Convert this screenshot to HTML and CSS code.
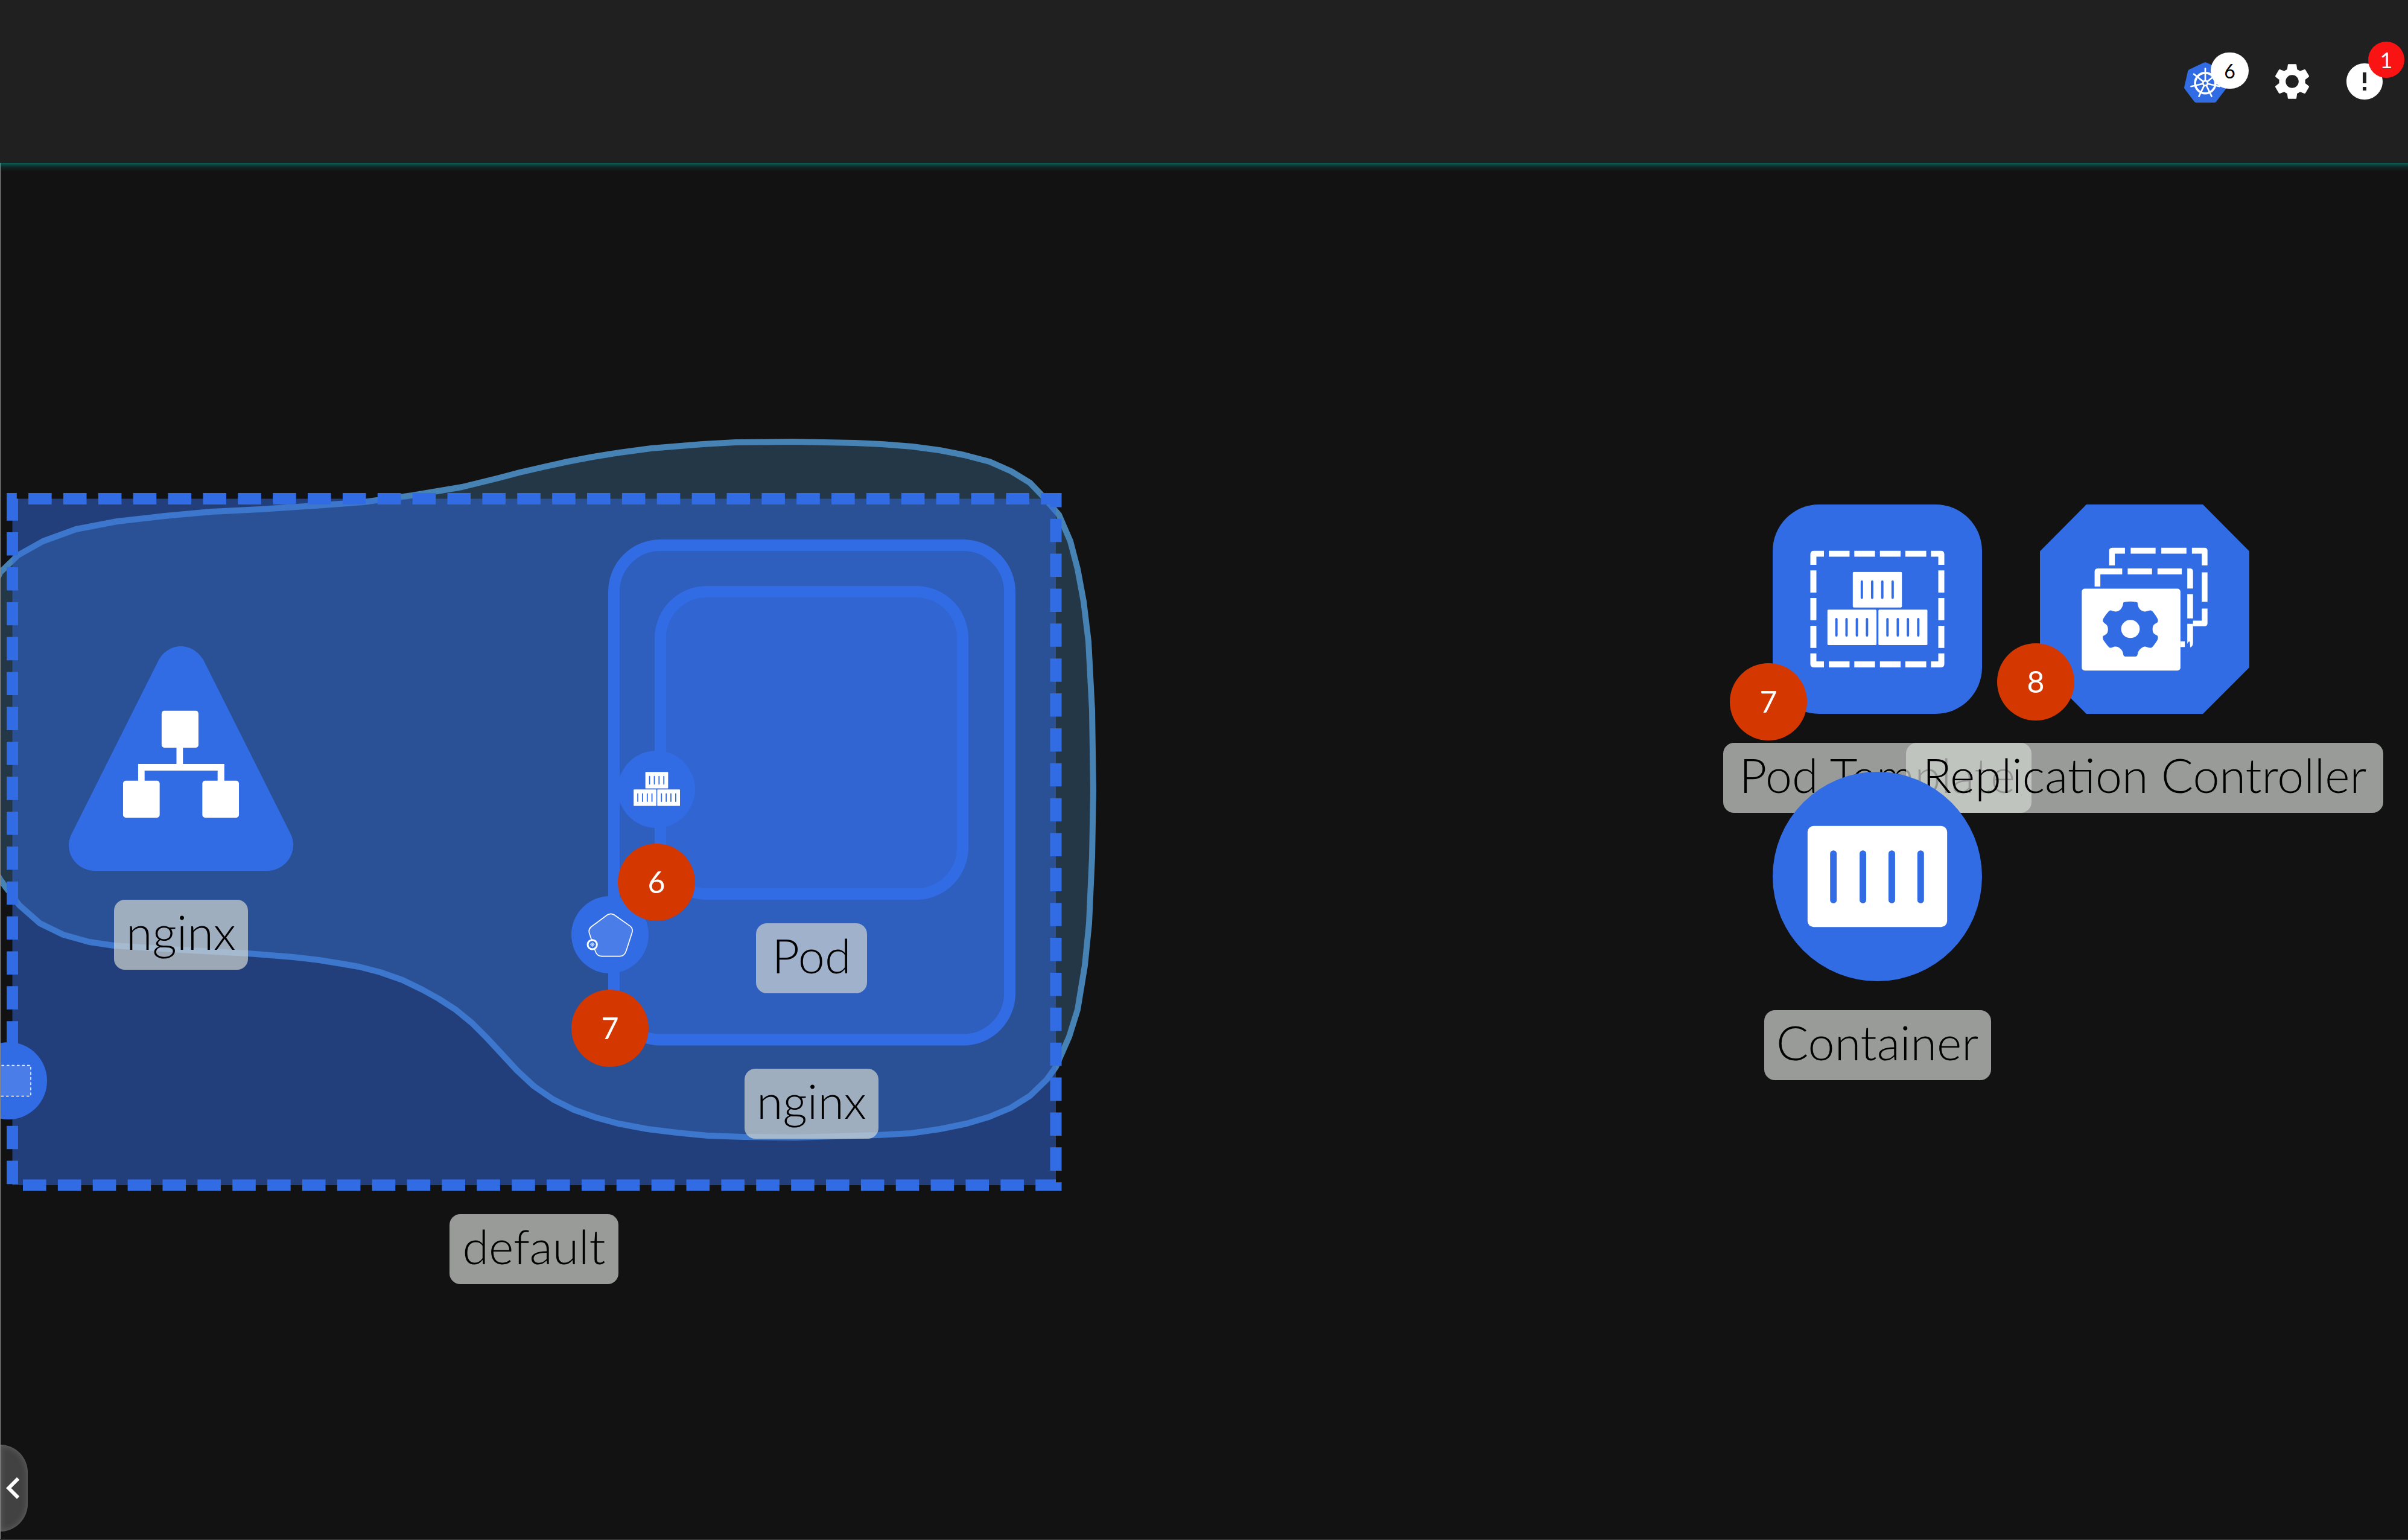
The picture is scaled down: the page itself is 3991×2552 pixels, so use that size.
FILE: index.html
```html
<!DOCTYPE html>
<html lang="en">
<head>
<meta charset="utf-8">
<meta name="viewport" content="width=device-width, initial-scale=1">
<title>Design canvas</title>
<link rel="stylesheet" href="styles.css">
</head>
<body>
<svg class="defs" aria-hidden="true">
  <symbol id="boxes" viewBox="526 413 466 343">
    <g fill="#fff">
      <rect x="645" y="414" width="228" height="165" rx="5"/>
      <rect x="527" y="589" width="228" height="165" rx="5"/>
      <rect x="764" y="589" width="228" height="165" rx="5"/>
    </g>
    <path d="M687 459V534M735 459V534M782 459V534M830 459V534M569 633V709M616 633V709M664 633V709M711 633V709M806 633V709M854 633V709M901 633V709M949 633V709" stroke="#326ce5" stroke-width="11" stroke-linecap="round"/>
  </symbol>
</svg>

<header class="topbar">
  <button class="tool tool-context" type="button" aria-label="Kubernetes contexts">
    <svg class="k8s" viewBox="180 188 210 202" aria-hidden="true">
      <path d="M278 190Q285 187 292 190L364 224Q370 227 372 233L390 312Q391 318 387 323L339 386Q335 390 329 390H241Q235 390 231 386L183 323Q179 318 180 312L198 233Q200 227 206 224Z" fill="#326ce5"/>
      <g stroke="#fff" fill="none" stroke-linecap="round">
        <circle cx="285" cy="293" r="51" stroke-width="11"/>
        <circle cx="285" cy="293" r="12" stroke-width="8"/>
        <g stroke-width="8">
          <path d="M285 281V220"/>
          <path d="M285 281V220" transform="rotate(51.43 285 293)"/>
          <path d="M285 281V220" transform="rotate(102.86 285 293)"/>
          <path d="M285 281V220" transform="rotate(154.29 285 293)"/>
          <path d="M285 281V220" transform="rotate(205.71 285 293)"/>
          <path d="M285 281V220" transform="rotate(257.14 285 293)"/>
          <path d="M285 281V220" transform="rotate(308.57 285 293)"/>
        </g>
      </g>
    </svg>
    <span class="count count-light">6</span>
  </button>
  <button class="tool" type="button" aria-label="Settings">
    <svg class="glyph" viewBox="0 0 24 24" aria-hidden="true"><path d="M19.14 12.94c.04-.3.06-.61.06-.94 0-.32-.02-.64-.07-.94l2.03-1.58c.18-.14.23-.41.12-.61l-1.92-3.32c-.12-.22-.37-.29-.59-.22l-2.39.96c-.5-.38-1.03-.7-1.62-.94l-.36-2.54c-.04-.24-.24-.41-.48-.41h-3.84c-.24 0-.43.17-.47.41l-.36 2.54c-.59.24-1.13.57-1.62.94l-2.39-.96c-.22-.08-.47 0-.59.22L2.74 8.87c-.12.21-.08.47.12.61l2.03 1.58c-.05.3-.09.63-.09.94s.02.64.07.94l-2.03 1.58c-.18.14-.23.41-.12.61l1.92 3.32c.12.22.37.29.59.22l2.39-.96c.5.38 1.03.7 1.62.94l.36 2.54c.05.24.24.41.48.41h3.84c.24 0 .44-.17.47-.41l.36-2.54c.59-.24 1.13-.56 1.62-.94l2.39.96c.22.08.47 0 .59-.22l1.92-3.32c.12-.22.07-.47-.12-.61l-2.01-1.58zM12 15.6c-1.98 0-3.6-1.62-3.6-3.6s1.62-3.6 3.6-3.6 3.6 1.62 3.6 3.6-1.62 3.6-3.6 3.6z"/></svg>
  </button>
  <button class="tool" type="button" aria-label="Notifications">
    <svg class="glyph" viewBox="0 0 24 24" aria-hidden="true"><path d="M12 2C6.480 2 2 6.480 2 12s4.480 10 10 10 10-4.480 10-10S17.520 2 12 2zm1 15h-2v-2h2v2zm0-4h-2V7h2v6z"/></svg>
    <span class="count count-alert">1</span>
  </button>
</header>

<main class="canvas">
  <svg class="hulls" aria-hidden="true">
    <g transform="translate(0 -270)">
      <path class="blob" d="M0 949L30 920L71 897L126 877L194 864L273 855L350 848L431 844L522 838L603 832L683 821L766 807L827 792L861 783L900 774L941 765L983 757L1027 750L1079 743L1165 736L1219 733L1314 732L1417 734L1461 736L1512 740L1557 746L1598 754L1640 765L1676 781L1707 800L1729 823L1755 853L1774 897L1786 943L1796 997L1804 1063L1810 1177L1812 1310L1810 1420L1805 1530L1798 1600L1786 1673L1772 1718L1750 1768L1735 1789L1707 1816L1675 1836L1639 1851L1602 1862L1558 1871L1510 1878L1454 1881L1318 1885L1232 1884L1173 1882L1122 1877L1073 1871L1025 1862L988 1852L951 1839L917 1822L885 1800L857 1774L833 1748L807 1720L782 1695L755 1673L727 1655L700 1640L667 1624L630 1611L595 1602L560 1596L529 1591L486 1586L436 1582L411 1580L300 1574L189 1567L148 1561L105 1549L66 1530L32 1500L10 1471L0 1457L-22 1415L-34 1300L-34 1120L-22 1000Z"/>
      <rect class="namespace" x="20.500" y="826.500" width="1729.500" height="1137.500"/>
      <rect class="group" x="1017.500" y="903.500" width="656" height="819.500" rx="77"/>
      <rect class="group" x="1094.500" y="980.500" width="501" height="501" rx="77"/>
    </g>
  </svg>

  <div class="node service">
    <svg class="shape" viewBox="319 174 1042 912" preserveAspectRatio="none" aria-hidden="true">
      <path d="M733 236C755 197 795 174 839 174C883 174 924 197 946 233L1350 938Q1361 958 1361 982C1361 1040 1305 1086 1243 1086H438C374 1086 319 1040 319 982Q319 960 331 938Z" fill="#326ce5"/>
      <path d="M819 580H849V652H1041V726H1010V679H671V726H641V652H819Z" fill="#fff"/>
      <rect x="750" y="436" width="171" height="150" rx="12" fill="#fff"/>
      <rect x="571" y="720" width="170" height="150" rx="12" fill="#fff"/>
      <rect x="939" y="720" width="170" height="150" rx="12" fill="#fff"/>
    </svg>
    <span class="label w-nginx">nginx</span>
  </div>

  <span class="label w-pod pod-label">Pod</span>
  <span class="label w-nginx deployment-label">nginx</span>
  <span class="label w-default namespace-label">default</span>

  <svg class="handle namespace-handle" viewBox="0 0 128 128" aria-hidden="true">
    <circle cx="64" cy="64" r="64" fill="#326ce5"/>
    <rect x="27" y="38.500" width="74" height="51" fill="#fff" fill-opacity=".12" stroke="#fff" stroke-width="1.500" stroke-dasharray="4.500 4"/>
  </svg>
  <svg class="handle pod-handle" viewBox="0 0 128 128" aria-hidden="true">
    <circle cx="64" cy="64" r="64" fill="#326ce5"/>
    <use href="#boxes" x="26" y="35" width="77" height="57"/>
  </svg>
  <svg class="handle deployment-handle" viewBox="51 46 384 384" aria-hidden="true">
    <circle cx="243" cy="238" r="192" fill="#326ce5"/>
    <path d="M230 139Q247 129 264 139L343 195Q358 206 353 227L324 317Q315 345 293 345H201Q177 345 169 317L140 230Q135 211 149 199Z" fill="#fff" fill-opacity=".12" stroke="#fff" stroke-width="5"/>
    <circle cx="155" cy="287" r="23" fill="#326ce5" stroke="#fff" stroke-width="9"/>
    <g stroke="#fff" fill="none" stroke-width="2">
      <circle cx="155" cy="287" r="8"/>
      <path d="M155 275V299M143 287H167M147 278L163 296M163 278L147 296"/>
    </g>
  </svg>
  <span class="errors pod-errors">6</span>
  <span class="errors deployment-errors">7</span>

  <div class="node pod-template">
    <svg class="shape" viewBox="273 101 972 972" aria-hidden="true">
      <rect x="273" y="101" width="972" height="972" rx="216" fill="#326ce5"/>
      <g fill="#fff">
        <path d="M511 316V343H476V381H448V332Q448 316 464 316ZM1008 316V343H1042V381H1070V332Q1070 316 1054 316ZM511 857V829H476V792H448V841Q448 857 464 857ZM1008 857V829H1042V792H1070V841Q1070 857 1054 857Z"/>
        <path d="M534 316h96v27h-96zM652 316h96v27h-96zM771 316h96v27h-96zM889 316h97v27h-97zM534 829h96v28h-96zM652 829h96v28h-96zM771 829h96v28h-96zM889 829h97v28h-97z"/>
        <path d="M448 407h28v103h-28zM448 535h28v103h-28zM448 664h28v103h-28zM1042 407h28v103h-28zM1042 535h28v103h-28zM1042 664h28v103h-28z"/>
      </g>
      <use href="#boxes" x="526" y="413" width="466" height="343"/>
    </svg>
    <span class="label w-template">Pod Template</span>
  </div>

  <div class="node replication">
    <svg class="shape" viewBox="223 101 766 972" preserveAspectRatio="none" aria-hidden="true">
      <path d="M393 101H819L989 318V857L819 1073H393L223 857V318Z" fill="#326ce5"/>
      <g fill="#fff">
        <path d="M534 302V329H497V384H476V316Q476 302 489 302ZM779 302V329H815V384H836V316Q836 302 825 302ZM555 302h91v27h-91zM667 302h92v27h-92zM815 416h21v137h-21zM815 584h21v68Q836 666 825 666H783V640H815Z"/>
        <path d="M524 398V425H444V482H423V412Q423 398 436 398ZM544 398h89v27h-89zM653 398h89v27h-89zM762 398H771Q783 398 783 412V491H762ZM762 517h21v113h-21zM762 655h21v88Q783 760 773 764L771 737Q766 736 762 748ZM737 736h16v27h-16z"/>
        <rect x="376" y="492" width="361" height="380" rx="11" ry="14"/>
      </g>
      <path fill-rule="evenodd" fill="#326ce5" d="M528 556Q529 552 554 551Q579 552 580 557C581 590 598 598 607 598C616 598 620 592 630 593Q636 595 652 628Q657 640 653 648C646 656 635 655 635 680C635 705 648 704 653 710Q657 720 652 732Q636 764 630 766C620 768 616 761 607 761C598 762 582 775 580 798Q579 806 572 807H536Q529 806 528 798C526 775 513 762 500 761C490 761 488 768 479 766Q474 765 456 732Q451 722 454 712C462 704 472 704 472 680C472 656 460 656 454 645Q451 638 456 628Q474 594 479 593C486 592 490 598 500 598C512 598 526 585 528 556ZM554 637A34 42 0 1 0 554 721A34 42 0 1 0 554 637Z"/>
    </svg>
    <span class="label w-replication">Replication Controller</span>
  </div>

  <span class="errors template-errors">7</span>
  <span class="errors replication-errors">8</span>

  <div class="node container">
    <svg class="shape" viewBox="0 0 348 348" aria-hidden="true">
      <circle cx="174" cy="174" r="174" fill="#326ce5"/>
      <rect x="58" y="90" width="232" height="168" rx="10" fill="#fff"/>
      <path d="M101 136V213M150 136V213M198 136V213M246 136V213" stroke="#326ce5" stroke-width="11" stroke-linecap="round"/>
    </svg>
    <span class="label w-container">Container</span>
  </div>

  <button class="drawer-toggle" type="button" aria-label="Expand panel">
    <svg class="glyph" viewBox="0 0 24 24" aria-hidden="true"><path d="M15.410 7.410L14 6l-6 6 6 6 1.410-1.410L10.830 12z"/></svg>
  </button>
</main>
</body>
</html>
```
FILE: styles.css
```css
* {
  box-sizing: border-box;
}

body {
  margin: 0;
  min-height: 100vh;
  display: flex;
  flex-direction: column;
  background: #121212;
  font-family: Lato, "Liberation Sans", sans-serif;
  font-weight: 300;
  overflow: hidden;
}

button {
  margin: 0;
  padding: 0;
  border: 0;
  background: none;
  color: inherit;
  font: inherit;
}

.defs {
  position: absolute;
  width: 0;
  height: 0;
}

/* Top bar */

.topbar {
  position: relative;
  z-index: 2;
  display: flex;
  justify-content: flex-end;
  align-items: center;
  height: 270px;
  padding-right: 12px;
  background: #202020;
}

.topbar::after {
  content: "";
  position: absolute;
  top: 100%;
  left: 0;
  right: 0;
  height: 14px;
  background: linear-gradient(rgba(0, 179, 159, .48), rgba(0, 179, 159, .12) 50%, rgba(0, 179, 159, 0));
}

.tool {
  position: relative;
  display: flex;
  align-items: center;
  justify-content: center;
  width: 120px;
  height: 120px;
}

.tool-context {
  margin-right: 24px;
}

.glyph {
  display: block;
  width: 72px;
  height: 72px;
  fill: #fff;
}

.k8s {
  display: block;
  width: 70px;
  height: 67px;
  margin-top: 2px;
}

.count {
  position: absolute;
  display: flex;
  align-items: center;
  justify-content: center;
  height: 60px;
  border-radius: 30px;
  font-weight: 400;
}

.count-light {
  top: 12px;
  left: 69px;
  width: 63px;
  background: #fff;
  color: #000;
  font-size: 32px;
}

.count-alert {
  top: -6px;
  left: 66px;
  width: 60px;
  background: #fa1313;
  color: #fff;
  font-size: 36px;
}

/* Graph canvas */

.canvas {
  position: relative;
  flex: 1;
  overflow: hidden;
  border-bottom: 2px solid #333;
}

.canvas::after {
  content: "";
  position: absolute;
  inset: 0 auto 0 0;
  width: 1px;
  background: #888;
}

.hulls {
  position: absolute;
  inset: 0;
  width: 100%;
  height: 100%;
}

.blob {
  fill: #4682b4;
  fill-opacity: .33;
  stroke: #4682b4;
  stroke-width: 10;
  stroke-linejoin: round;
}

.namespace {
  fill: #326ce5;
  fill-opacity: .5;
  stroke: #326ce5;
  stroke-width: 19;
  stroke-dasharray: 38.580 19.290;
  stroke-dashoffset: 31.300;
}

.group {
  fill: #326ce5;
  fill-opacity: .5;
  stroke: #326ce5;
  stroke-width: 19;
}

.node {
  position: absolute;
  display: flex;
  flex-direction: column;
  align-items: center;
  gap: 48px;
  width: 347px;
}

.shape {
  flex: none;
  width: 347px;
  height: 347px;
}

.service {
  top: 801px;
  left: 114px;
  width: 372px;
}

.service .shape {
  width: 372px;
  height: 372px;
}

.pod-template {
  top: 566px;
  left: 2938px;
}

.replication {
  top: 566px;
  left: 3381px;
}

.container {
  top: 1009px;
  left: 2938px;
}

.label {
  flex: none;
  height: 116px;
  padding-bottom: 10px;
  border-radius: 18px;
  background: rgba(210, 213, 208, .7);
  color: #000;
  font-size: 79px;
  line-height: 106px;
  text-align: center;
  white-space: nowrap;
}

.w-nginx {
  width: 222px;
}

.w-pod {
  width: 184px;
}

.w-default {
  width: 280px;
}

.w-template {
  width: 511px;
}

.w-replication {
  width: 791px;
}

.w-container {
  width: 376px;
}

.pod-label,
.deployment-label,
.namespace-label {
  position: absolute;
}

.pod-label {
  top: 1260px;
  left: 1253px;
}

.deployment-label {
  top: 1501px;
  left: 1234px;
}

.namespace-label {
  top: 1742px;
  left: 745px;
}

.handle {
  position: absolute;
  width: 128px;
  height: 128px;
}

.namespace-handle {
  top: 1457px;
  left: -50px;
}

.pod-handle {
  top: 974px;
  left: 1024px;
}

.deployment-handle {
  top: 1215px;
  left: 947px;
}

.errors {
  position: absolute;
  width: 128px;
  height: 128px;
  border-radius: 50%;
  background: #d53700;
  color: #fff;
  font-size: 50px;
  font-weight: 400;
  line-height: 126px;
  text-align: center;
}

.pod-errors {
  top: 1128px;
  left: 1024px;
}

.deployment-errors {
  top: 1370px;
  left: 947px;
}

.template-errors {
  top: 829px;
  left: 2867px;
}

.replication-errors {
  top: 796px;
  left: 3310px;
}

.drawer-toggle {
  position: absolute;
  bottom: 12px;
  left: 0;
  display: flex;
  align-items: center;
  justify-content: flex-end;
  width: 46px;
  height: 144px;
  border-radius: 0 46px 46px 0;
  background: #424242;
  box-shadow: inset 0 0 12px #666;
  overflow: hidden;
}

.drawer-toggle .glyph {
  flex: none;
  margin-right: -12px;
}
```
